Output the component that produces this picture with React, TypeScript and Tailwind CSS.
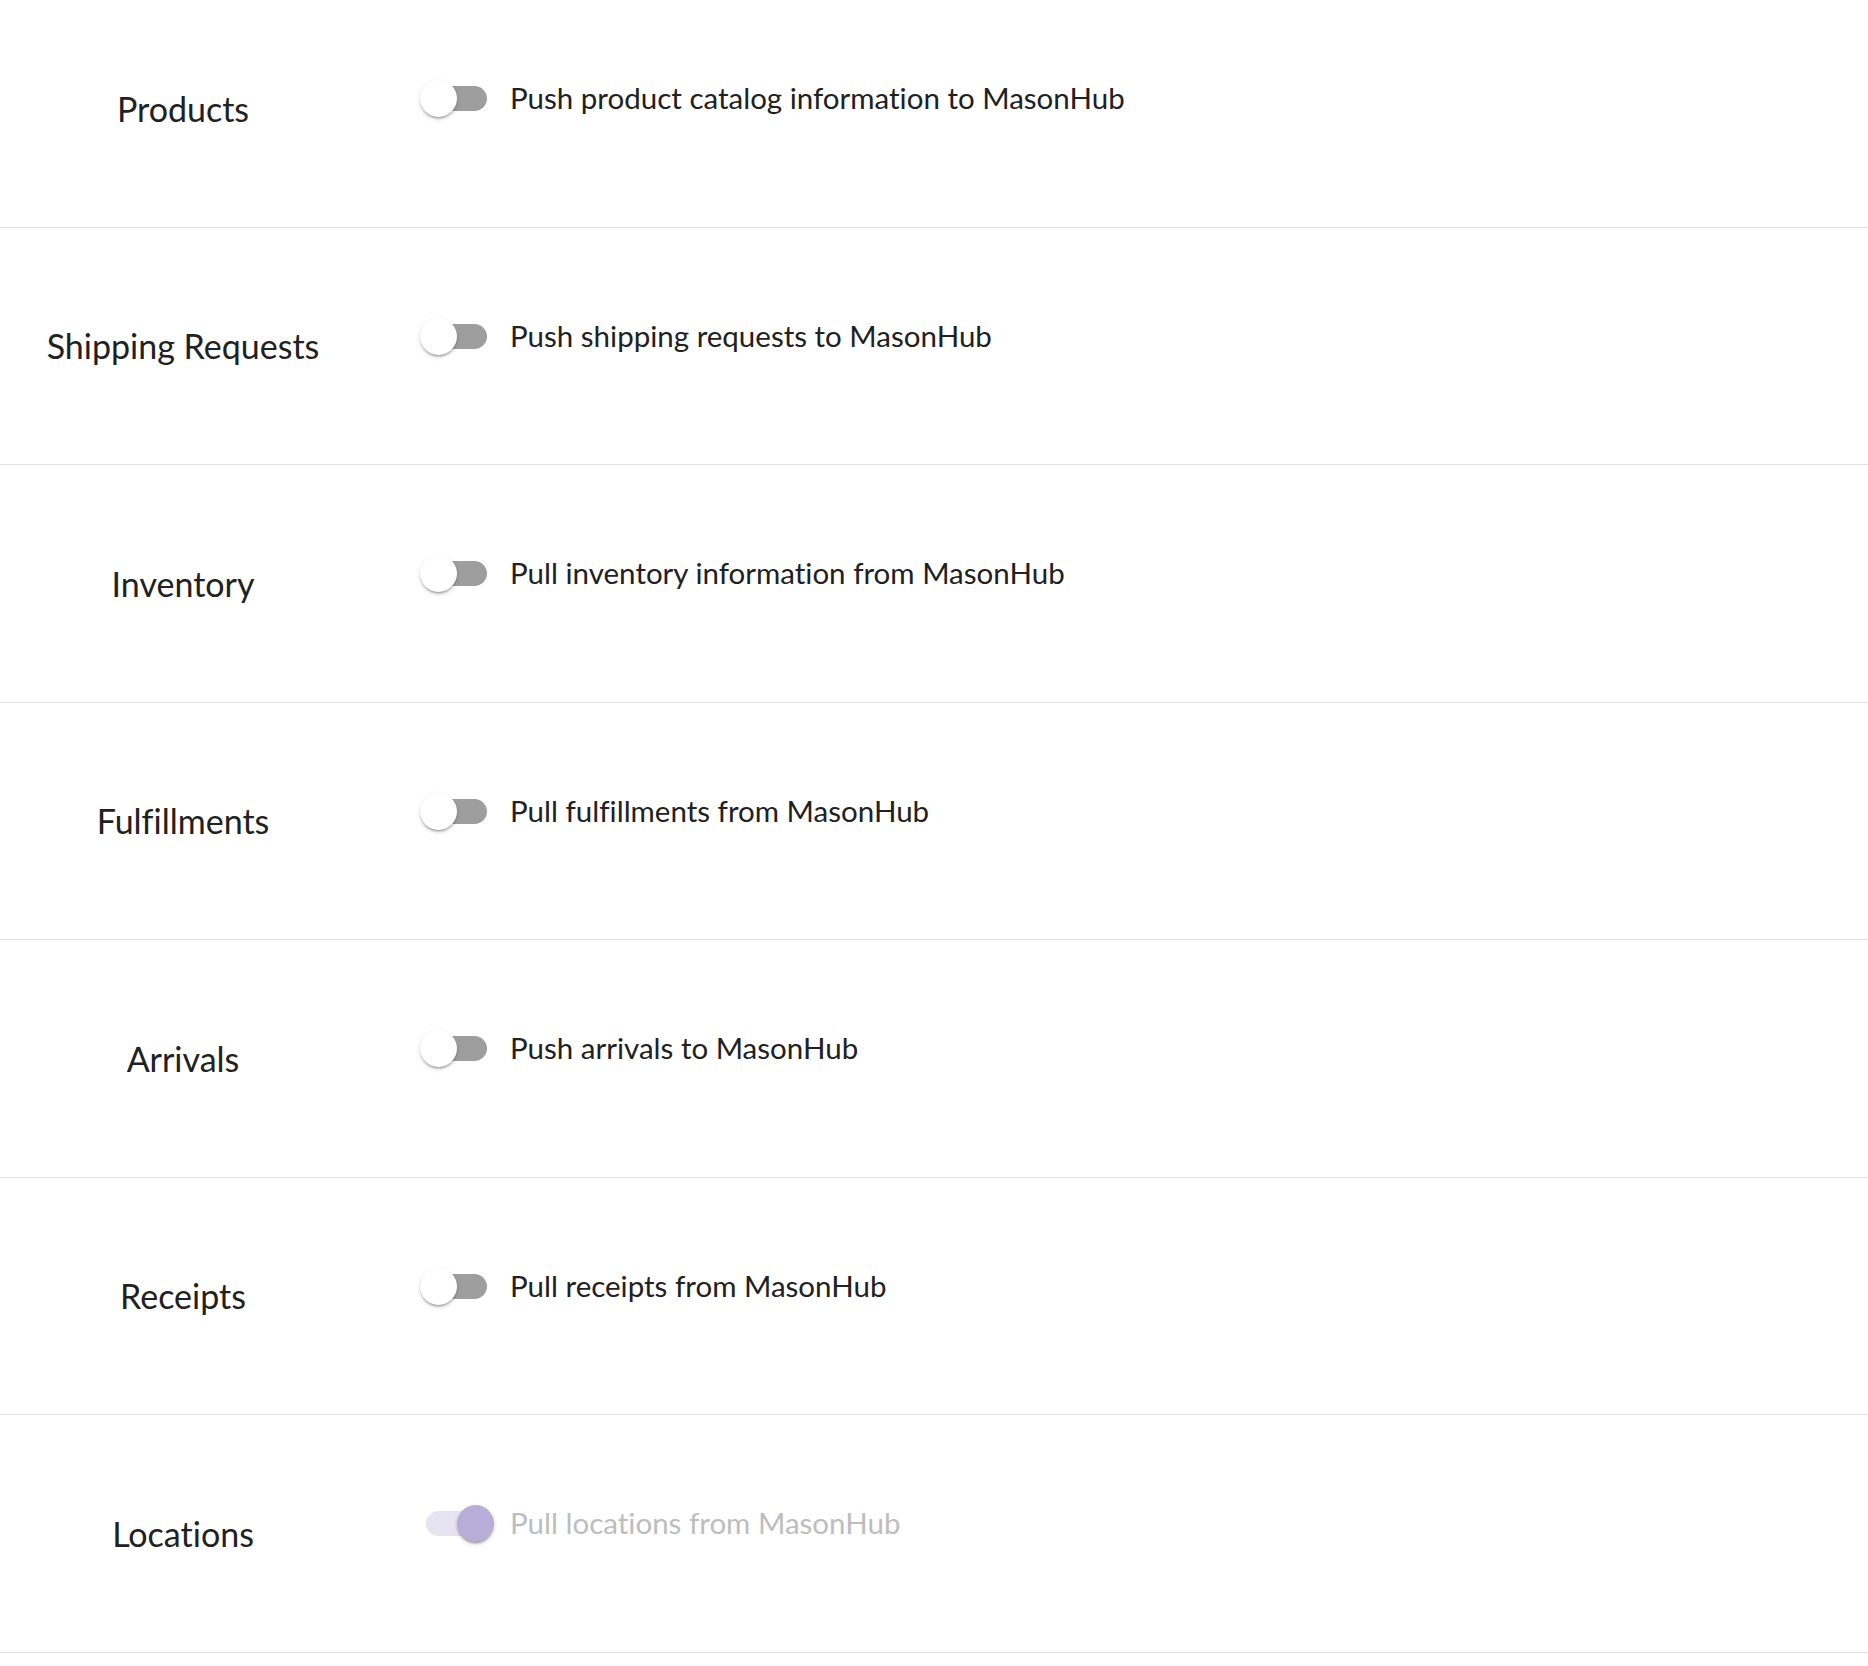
import React from 'react';

type Row = {
  label: string;
  text: string;
  checked?: boolean;
  disabled?: boolean;
};

const rows: Row[] = [
  { label: 'Products', text: 'Push product catalog information to MasonHub' },
  { label: 'Shipping Requests', text: 'Push shipping requests to MasonHub' },
  { label: 'Inventory', text: 'Pull inventory information from MasonHub' },
  { label: 'Fulfillments', text: 'Pull fulfillments from MasonHub' },
  { label: 'Arrivals', text: 'Push arrivals to MasonHub' },
  { label: 'Receipts', text: 'Pull receipts from MasonHub' },
  { label: 'Locations', text: 'Pull locations from MasonHub', checked: true, disabled: true },
];

// Switch w stylu MUI, powiększony ~1.8x
const Toggle: React.FC<{ checked?: boolean; disabled?: boolean }> = ({ checked, disabled }) => (
  <span className="relative block w-[104px] h-[68px] shrink-0">
    <span
      className={`absolute left-[22px] top-[22px] w-[61px] h-[25px] rounded-full ${
        checked && disabled ? 'bg-[#e7e4f2]' : 'bg-[#9e9e9e]'
      }`}
    />
    <span
      className={`absolute top-[16px] w-[37px] h-[37px] rounded-full shadow-[0_3px_2px_-2px_rgba(0,0,0,0.2),0_2px_2px_0_rgba(0,0,0,0.14),0_2px_5px_0_rgba(0,0,0,0.12)] ${
        checked ? 'left-[53px]' : 'left-[16px]'
      } ${checked && disabled ? 'bg-[#b9aed8]' : 'bg-white'}`}
    />
  </span>
);

export default function App() {
  return (
    <div className="bg-white w-full min-h-[1666px] overflow-hidden font-['Lato','Noto_Sans',sans-serif] [font-variant-ligatures:none]">
      <div className="mt-[-10px]">
        {rows.map((r) => (
          <div key={r.label} className="flex items-center h-[237.5px] border-b border-[#e0e0e0]">
            <div className="w-[366px] text-center text-[34px] text-[#212121] shrink-0">{r.label}</div>
            <div className="flex items-center ml-[38px] mb-[20px]">
              <Toggle checked={r.checked} disabled={r.disabled} />
              <span
                className={`text-[29.5px] ml-[2px] ${r.disabled ? 'text-[#bdbdbd]' : 'text-[#212121]'}`}
              >
                {r.text}
              </span>
            </div>
          </div>
        ))}
      </div>
    </div>
  );
}
